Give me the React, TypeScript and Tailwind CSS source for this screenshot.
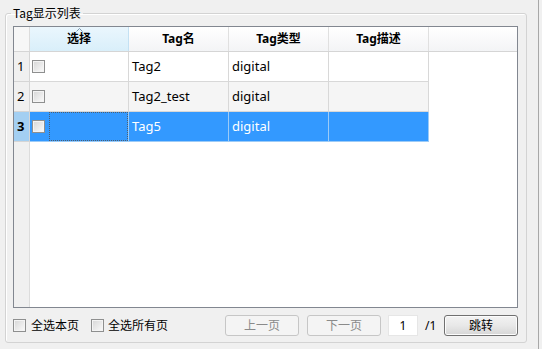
import React from 'react';

const Check = () => (
  <div className="w-[13px] h-[13px] shrink-0 border border-[#8e8f8f] bg-gradient-to-br from-[#d6d6d6] to-[#fbfbfb] shadow-[inset_0_0_0_1px_#f4f4f4]" />
);

const rows = [
  { no: '1', name: 'Tag2', type: 'digital', desc: '' },
  { no: '2', name: 'Tag2_test', type: 'digital', desc: '' },
  { no: '3', name: 'Tag5', type: 'digital', desc: '' },
];

export default function App() {
  const selected = 2;

  return (
    <div className="w-[542px] h-[349px] bg-[#f0f0f0] flex font-['Noto_Sans','Noto_Sans_CJK_SC',sans-serif] text-black">
      <div className="w-[538px] pl-[5px] pt-[5px]">
        <fieldset className="w-[522px] h-[338px] border border-[#d3d3d3] rounded-[3px] pl-[7px] pr-[8px] shadow-[inset_1px_1px_0_#ffffff]">
          <legend className="-ml-[2px] px-[2px] text-[12px] leading-[16px] font-['Noto_Sans_CJK_SC',sans-serif]">
            Tag显示列表
          </legend>

          {/* Table */}
          <div className="mt-[5px] w-[505px] h-[282px] border border-[#828790] bg-white flex flex-col">
            {/* Header */}
            <div className="flex h-[25px] border-b border-[#d5d5d5] bg-gradient-to-b from-white to-[#f3f4f6] text-[12px] font-bold leading-[24px]">
              <div className="w-[16px] border-r border-[#dcdcdc] bg-[#f7f7f7]" />
              <div className="w-[99px] border-r border-[#c4e1f3] bg-gradient-to-b from-[#eaf6fd] to-[#d9effa] relative text-center">
                <svg className="absolute left-[46px] top-[1px]" width="7" height="4" viewBox="0 0 7 4">
                  <path d="M0.5 3.5 L3.5 0.5 L6.5 3.5" fill="none" stroke="#7f98ae" strokeWidth="1" />
                </svg>
                选择
              </div>
              <div className="w-[100px] border-r border-[#e0e0e0] text-center">Tag名</div>
              <div className="w-[100px] border-r border-[#e0e0e0] text-center">Tag类型</div>
              <div className="w-[100px] border-r border-[#e0e0e0] text-center">Tag描述</div>
              <div className="flex-1" />
            </div>

            {/* Rows */}
            {rows.map((r, i) => {
              const sel = i === selected;
              const rowBg = sel ? 'bg-[#3399ff] text-white' : i % 2 === 1 ? 'bg-[#f5f5f5]' : 'bg-white';
              const line = sel ? 'border-[#9ccbf7]' : 'border-[#d8d8d8]';
              return (
                <div key={r.no} className="flex h-[30px] text-[13px] leading-[29px]">
                  <div
                    className={`w-[16px] pl-[3px] border-r border-b border-[#d5d5d5] ${
                      sel ? 'bg-[#a3cff2] font-bold' : 'bg-[#f0f0f0]'
                    }`}
                  >
                    {r.no}
                  </div>
                  <div className={`w-[99px] flex items-center border-r border-b ${line} ${rowBg}`}>
                    <div className="pl-[2px] pr-[4px]">
                      <Check />
                    </div>
                    {sel && <div className="flex-1 h-full border border-dotted border-[#4d5e70]" />}
                  </div>
                  <div className={`w-[100px] pl-[3px] border-r border-b ${line} ${rowBg}`}>{r.name}</div>
                  <div className={`w-[100px] pl-[3px] border-r border-b ${line} ${rowBg}`}>{r.type}</div>
                  <div className={`w-[100px] pl-[3px] border-r border-b ${line} ${rowBg}`}>{r.desc}</div>
                  <div className="flex-1 bg-white" />
                </div>
              );
            })}

            <div className="flex-1 flex">
              <div className="w-[16px] bg-[#f0f0f0] border-r border-[#dcdcdc]" />
              <div className="flex-1 bg-white" />
            </div>
          </div>

          {/* Bottom bar */}
          <div className="mt-[7px] w-[505px] h-[21px] flex items-center text-[12px] leading-[16px]">
            <Check />
            <span className="ml-[5px]">全选本页</span>
            <div className="ml-[12px]">
              <Check />
            </div>
            <span className="ml-[4px]">全选所有页</span>

            <button className="ml-auto w-[74px] h-[21px] rounded-[3px] border border-[#c6c6c6] bg-[#f4f4f4] text-[#8a8a8a]">
              上一页
            </button>
            <button className="ml-[8px] w-[74px] h-[21px] rounded-[3px] border border-[#c6c6c6] bg-[#f4f4f4] text-[#8a8a8a]">
              下一页
            </button>
            <div className="ml-[7px] w-[30px] h-[21px] bg-white border border-[#e6e6e6] text-center leading-[19px]">1</div>
            <span className="ml-[7px] w-[12px]">/1</span>
            <button className="ml-[7px] w-[74px] h-[21px] rounded-[3px] border border-[#707070] bg-gradient-to-b from-[#f3f3f3] via-[#e8e8e8] to-[#d6d6d6] shadow-[inset_0_0_0_1px_#fcfcfc]">
              跳转
            </button>
          </div>
        </fieldset>
      </div>
      <div className="w-[4px] border-l border-[#a8a8a8]" />
    </div>
  );
}
